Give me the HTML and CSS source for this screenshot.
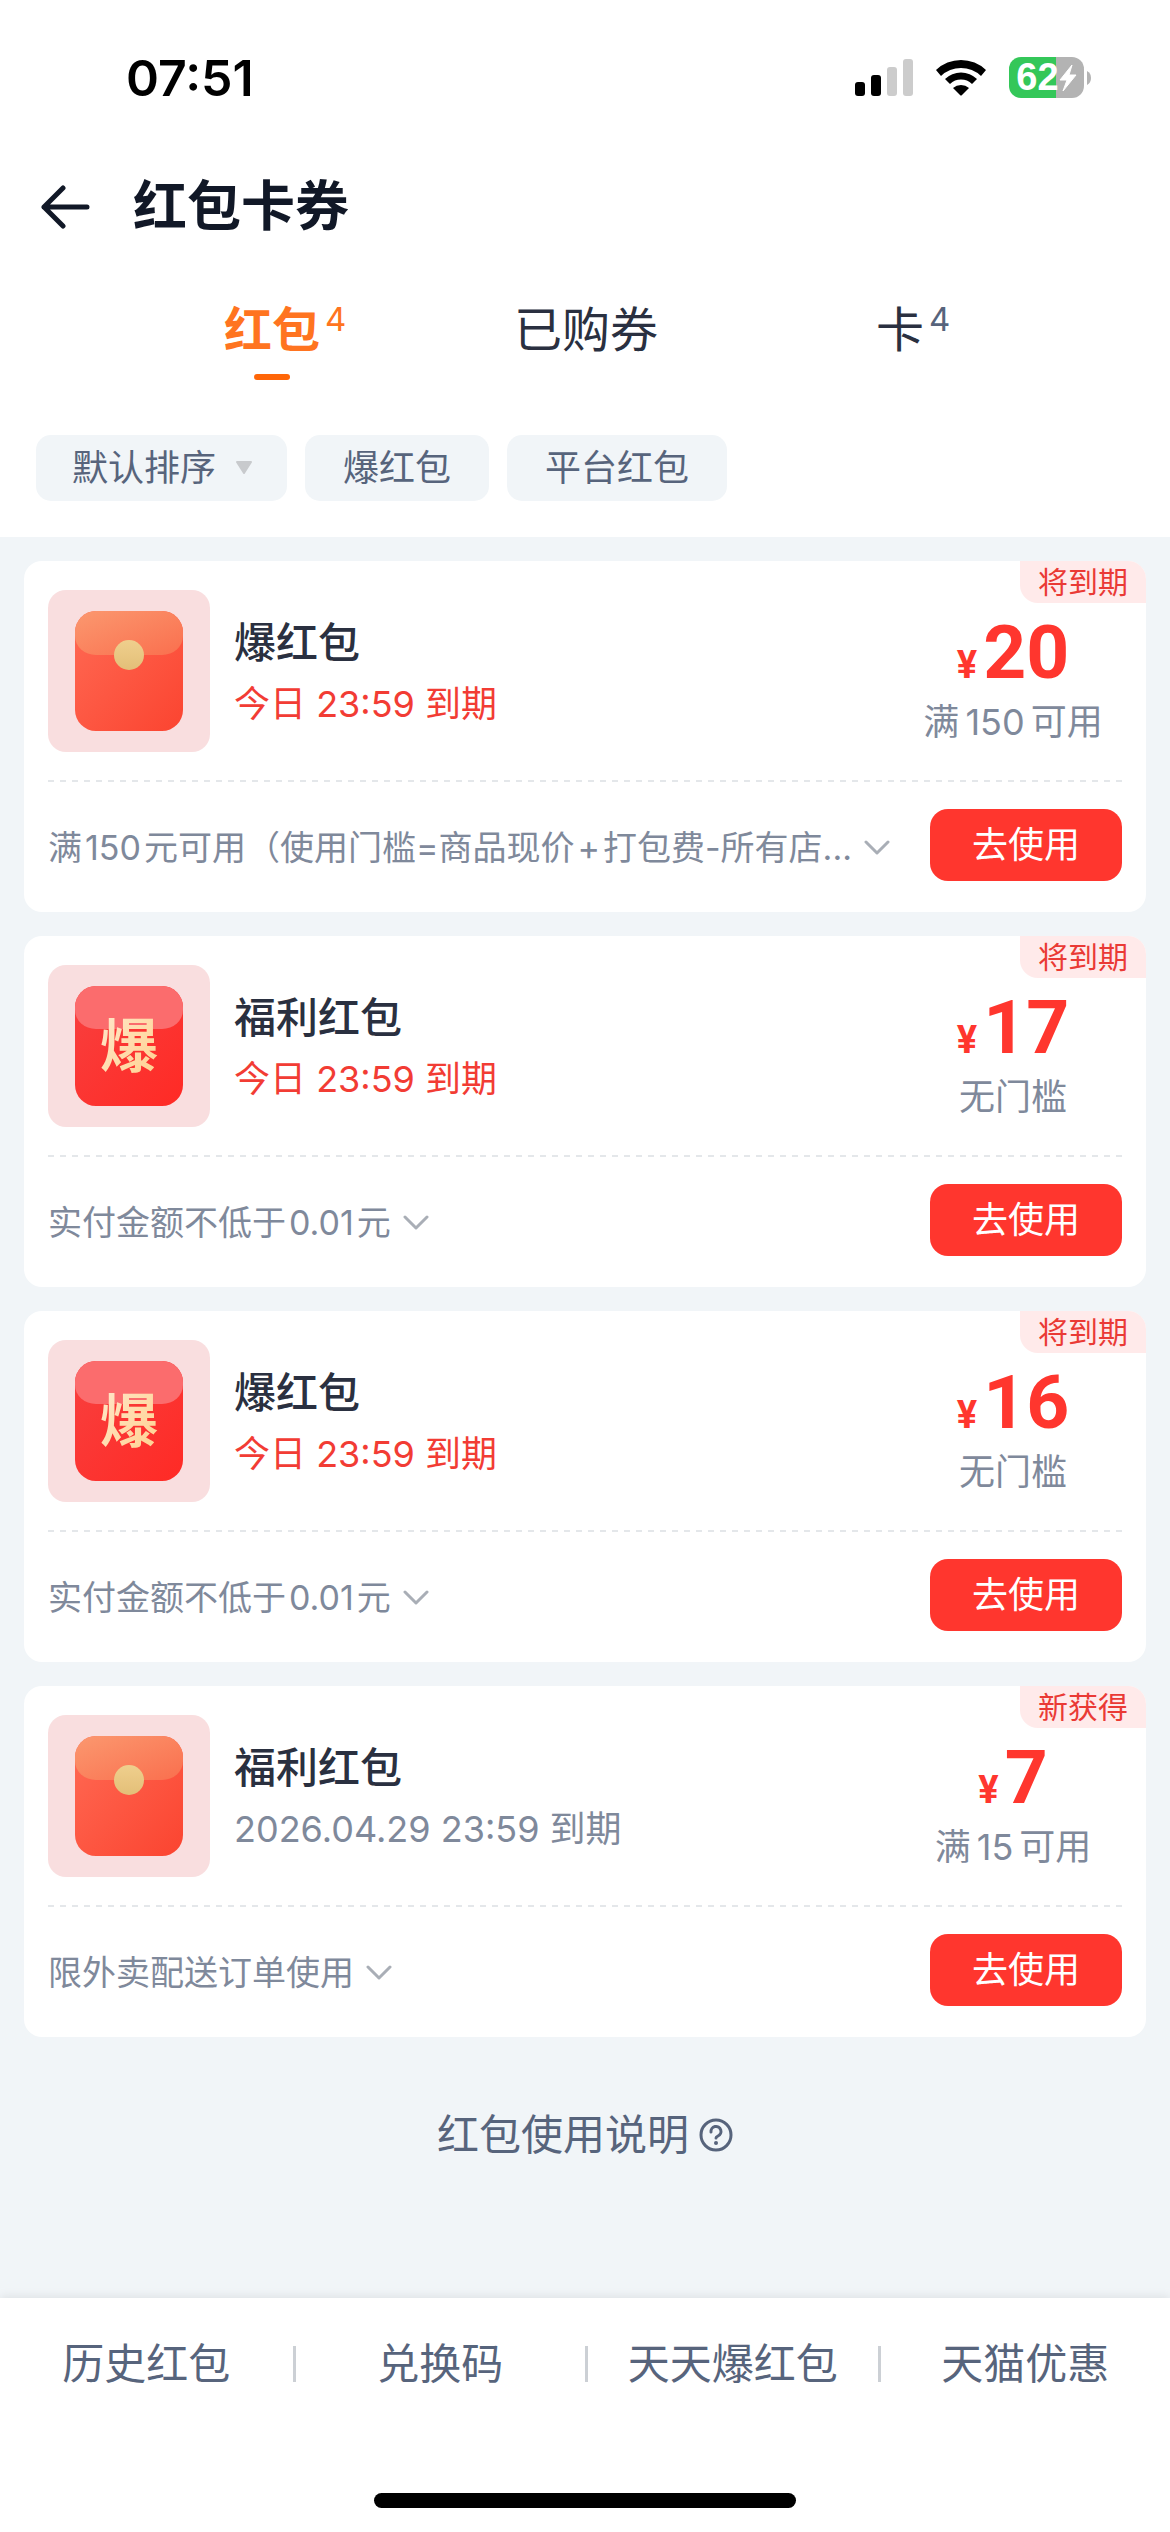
FILE: index.html
```html
<!DOCTYPE html>
<html lang="zh-CN">
<head>
<meta charset="utf-8">
<meta name="viewport" content="width=device-width, initial-scale=1">
<title>红包卡券</title>
<link rel="stylesheet" href="styles.css">
</head>
<body>
<svg class="defs" aria-hidden="true">
  <defs>
    <linearGradient id="body-orange" x1="0" y1="0" x2="1" y2="1"><stop offset="0" stop-color="#ff6a54"/><stop offset="1" stop-color="#fb4430"/></linearGradient>
    <linearGradient id="flap-orange" x1="0" y1="0" x2="1" y2="1"><stop offset="0" stop-color="#fb986f"/><stop offset="1" stop-color="#fa6f4e"/></linearGradient>
    <linearGradient id="seal" x1="0" y1="0" x2="0" y2="1"><stop offset="0" stop-color="#efcf8d"/><stop offset="1" stop-color="#e3bf78"/></linearGradient>
    <linearGradient id="body-red" x1="0" y1="0" x2="1" y2="1"><stop offset="0" stop-color="#f8403f"/><stop offset="1" stop-color="#ff2a25"/></linearGradient>
    <linearGradient id="gold" x1="0" y1="0" x2="1" y2="1"><stop offset="0" stop-color="#ffe9cf"/><stop offset="1" stop-color="#ffd08c"/></linearGradient>
  </defs>
  <symbol id="envelope" viewBox="0 0 162 162">
    <rect x="27" y="21" width="108" height="120" rx="21" fill="url(#body-orange)"/>
    <path d="M48 21H114A21 21 0 0 1 135 42V46A21 19 0 0 1 114 65H48A21 19 0 0 1 27 46V42A21 21 0 0 1 48 21Z" fill="url(#flap-orange)"/>
    <circle cx="81" cy="65" r="15" fill="url(#seal)"/>
  </symbol>
  <symbol id="packet" viewBox="0 0 162 162">
    <rect x="27" y="21" width="108" height="120" rx="21" fill="url(#body-red)"/>
    <path d="M48 21H114A21 21 0 0 1 135 42V45A21 19 0 0 1 114 64H48A21 19 0 0 1 27 45V42A21 21 0 0 1 48 21Z" fill="#fb6c6d"/>
  </symbol>
  <symbol id="chevron" viewBox="0 0 26 16">
    <path d="M2 2L13 13L24 2" fill="none" stroke="#a9aeb6" stroke-width="3" stroke-linecap="round" stroke-linejoin="round"/>
  </symbol>
</svg>

<div class="page">
  <header class="top">
    <div class="status">
      <time class="clock">07:51</time>
      <div class="status-icons">
        <svg width="58" height="37" viewBox="0 0 58 37" role="img" aria-label="信号">
          <rect x="0" y="23" width="10" height="14" rx="3"/><rect x="16" y="16" width="10" height="21" rx="3"/>
          <rect x="32" y="8" width="10" height="29" rx="3" fill="#ccc"/><rect x="48" y="0" width="10" height="37" rx="3" fill="#ccc"/>
        </svg>
        <svg class="wifi" width="52" height="38" viewBox="0 0 52 38" role="img" aria-label="Wi-Fi">
          <path d="M1 11A36 36 0 0 1 51 11L46 17A29 29 0 0 0 6 17Z"/>
          <path d="M10 20A23 23 0 0 1 42 20L37 25A16 16 0 0 0 15 25Z"/>
          <path d="M18 29A12 12 0 0 1 34 29L27 36Q26 37 25 36Z"/>
        </svg>
        <div class="battery">
          <span class="level">62</span>
          <svg width="18" height="28" viewBox="0 0 18 28" aria-hidden="true"><path d="M13 1L1 16H8L4 27L17 11H10Z" fill="#fff" stroke="#fff" stroke-linejoin="round"/></svg>
        </div>
        <svg class="battery-cap" width="4" height="14" viewBox="0 0 4 14" aria-hidden="true"><path d="M0 0Q4 2 4 7T0 14Z" fill="#b3b3b3"/></svg>
      </div>
    </div>
    <div class="title-bar">
      <button class="back" type="button" aria-label="返回">
        <svg width="50" height="44" viewBox="0 0 50 44" aria-hidden="true"><path d="M47 22H4M23 3L4 22L23 41" fill="none" stroke="#111827" stroke-width="5" stroke-linecap="round" stroke-linejoin="round"/></svg>
      </button>
      <h1>红包卡券</h1>
    </div>
    <div class="tabs" role="tablist">
      <button class="tab active" type="button" role="tab" aria-selected="true"><span class="tab-label">红包<sup>4</sup></span></button>
      <button class="tab" type="button" role="tab" aria-selected="false"><span class="tab-label">已购券</span></button>
      <button class="tab" type="button" role="tab" aria-selected="false"><span class="tab-label">卡<sup>4</sup></span></button>
    </div>
    <div class="filters">
      <div class="sort">
        <select class="chip" aria-label="排序"><option>默认排序</option></select>
        <svg width="18" height="14" viewBox="0 0 18 14" aria-hidden="true"><path d="M2 1H16L9 12Z" fill="#c8cacd" stroke="#c8cacd" stroke-width="2" stroke-linejoin="round"/></svg>
      </div>
      <button class="chip" type="button">爆红包</button>
      <button class="chip" type="button">平台红包</button>
    </div>
  </header>

  <main class="list">
    <article class="card">
      <span class="tag">将到期</span>
      <div class="card-main">
        <svg class="thumb" viewBox="0 0 162 162" aria-hidden="true"><use href="#envelope"/></svg>
        <div class="info"><h2>爆红包</h2><p class="expiry soon">今日 23:59 到期</p></div>
        <div class="value"><p class="price"><span class="yen">¥</span>20</p><p class="limit">满<span class="num">150</span>可用</p></div>
      </div>
      <div class="card-foot">
        <button class="rule" type="button"><span class="rule-text">满<span class="num">150</span>元可用（使用门槛=商品现价<span class="num">+</span>打包费-所有店...</span><svg class="chevron" aria-hidden="true"><use href="#chevron"/></svg></button>
        <button class="use" type="button">去使用</button>
      </div>
    </article>

    <article class="card">
      <span class="tag">将到期</span>
      <div class="card-main">
        <svg class="thumb" viewBox="0 0 162 162" aria-hidden="true"><use href="#packet"/><text class="packet-word" x="81" y="102" text-anchor="middle" fill="url(#gold)">爆</text></svg>
        <div class="info"><h2>福利红包</h2><p class="expiry soon">今日 23:59 到期</p></div>
        <div class="value"><p class="price"><span class="yen">¥</span>17</p><p class="limit">无门槛</p></div>
      </div>
      <div class="card-foot">
        <button class="rule" type="button"><span class="rule-text">实付金额不低于<span class="num">0.01</span>元</span><svg class="chevron" aria-hidden="true"><use href="#chevron"/></svg></button>
        <button class="use" type="button">去使用</button>
      </div>
    </article>

    <article class="card">
      <span class="tag">将到期</span>
      <div class="card-main">
        <svg class="thumb" viewBox="0 0 162 162" aria-hidden="true"><use href="#packet"/><text class="packet-word" x="81" y="102" text-anchor="middle" fill="url(#gold)">爆</text></svg>
        <div class="info"><h2>爆红包</h2><p class="expiry soon">今日 23:59 到期</p></div>
        <div class="value"><p class="price"><span class="yen">¥</span>16</p><p class="limit">无门槛</p></div>
      </div>
      <div class="card-foot">
        <button class="rule" type="button"><span class="rule-text">实付金额不低于<span class="num">0.01</span>元</span><svg class="chevron" aria-hidden="true"><use href="#chevron"/></svg></button>
        <button class="use" type="button">去使用</button>
      </div>
    </article>

    <article class="card">
      <span class="tag">新获得</span>
      <div class="card-main">
        <svg class="thumb" viewBox="0 0 162 162" aria-hidden="true"><use href="#envelope"/></svg>
        <div class="info"><h2>福利红包</h2><p class="expiry">2026.04.29 23:59 到期</p></div>
        <div class="value"><p class="price"><span class="yen">¥</span>7</p><p class="limit">满<span class="num">15</span>可用</p></div>
      </div>
      <div class="card-foot">
        <button class="rule" type="button"><span class="rule-text">限外卖配送订单使用</span><svg class="chevron" aria-hidden="true"><use href="#chevron"/></svg></button>
        <button class="use" type="button">去使用</button>
      </div>
    </article>

    <a class="help" href="#help">红包使用说明
      <svg width="34" height="34" viewBox="0 0 34 34" aria-hidden="true"><g fill="none" stroke="#57647c" stroke-width="3" stroke-linecap="round" stroke-linejoin="round"><circle cx="17" cy="17" r="15"/><path d="M12 14A5 5 0 1 1 19 18Q17 19 17 20"/></g><circle cx="17" cy="25" r="2" fill="#57647c"/></svg>
    </a>
  </main>

  <footer class="bottom">
    <nav class="links">
      <a href="#history">历史红包</a>
      <a href="#redeem">兑换码</a>
      <a href="#daily">天天爆红包</a>
      <a href="#tmall">天猫优惠</a>
    </nav>
    <div class="home-bar"></div>
  </footer>
</div>
</body>
</html>
```
FILE: styles.css
```css
* { box-sizing: border-box; }

body {
  margin: 0;
  background: #f1f5f8;
  color: #2a3040;
  font-family: Inter, "Noto Sans CJK SC", sans-serif;
}

button, select {
  margin: 0;
  padding: 0;
  border: 0;
  background: none;
  color: inherit;
  font: inherit;
  appearance: none;
}

h1, h2, p { margin: 0; }
a { color: inherit; text-decoration: none; }
svg { display: block; flex: none; }
.defs { position: absolute; width: 0; height: 0; }

.page {
  display: flex;
  flex-direction: column;
  min-height: 100vh;
}

.top { background: #fff; }

/* Status bar */
.status {
  display: flex;
  align-items: center;
  justify-content: space-between;
  height: 141px;
  padding: 14px 79px 0 126px;
}
.clock {
  color: #000;
  font-size: 50px;
  font-weight: 600;
  line-height: 60px;
}
.status-icons { display: flex; align-items: center; }
.wifi { margin: 0 22px; }
.battery {
  display: flex;
  align-items: center;
  justify-content: center;
  width: 75px;
  height: 41px;
  border-radius: 12px;
  background: linear-gradient(90deg, #34c759 63%, #b3b3b3 63%);
}
.level {
  color: #fff;
  font-family: "Liberation Sans", sans-serif;
  font-size: 38px;
  font-weight: 700;
  line-height: 41px;
}
.battery-cap { margin-left: 3px; }

/* Title */
.title-bar {
  display: flex;
  align-items: center;
  gap: 43px;
  height: 132px;
  padding: 0 40px;
}
h1 {
  color: #111827;
  font-size: 54px;
  font-weight: 600;
  line-height: 72px;
}

/* Tabs */
.tabs {
  display: grid;
  grid-template-columns: repeat(3, 1fr);
  padding: 24px 113px 0 115px;
}
.tab {
  display: flex;
  flex-direction: column;
  align-items: center;
  gap: 11px;
  height: 83px;
  font-size: 48px;
  line-height: 66px;
}
.tab-label { position: relative; }
.tab sup {
  position: absolute;
  left: 100%;
  top: 4px;
  margin-left: 5px;
  color: #57647c;
  font-size: 33px;
  font-weight: 400;
  line-height: 36px;
}
.active { color: #ff7420; font-weight: 600; }
.active sup { color: #ff7420; }
.active::after {
  content: "";
  width: 36px;
  height: 6px;
  border-radius: 3px;
  background: #ff6608;
}

/* Filters */
.filters {
  display: flex;
  gap: 18px;
  padding: 55px 36px 36px;
}
.chip {
  height: 66px;
  padding: 0 38px;
  border-radius: 15px;
  background: #f1f5f8;
  color: #57647c;
  font-size: 36px;
  line-height: 66px;
}
.sort { display: grid; align-items: center; }
.sort > * { grid-area: 1 / 1; }
.sort .chip { padding: 0 70px 0 36px; }
.sort svg { justify-self: end; margin-right: 34px; pointer-events: none; }

/* Coupon cards */
.list {
  display: flex;
  flex: 1;
  flex-direction: column;
  gap: 24px;
  padding: 24px;
}
.card {
  position: relative;
  padding: 0 24px;
  border-radius: 18px;
  background: #fff;
}
.tag {
  position: absolute;
  top: 0;
  right: 0;
  padding: 0 18px;
  border-radius: 0 18px;
  background: #ffeaea;
  color: #ea3a35;
  font-size: 30px;
  line-height: 42px;
}
.card-main {
  display: flex;
  align-items: center;
  gap: 24px;
  padding: 29px 0 28px;
}
.thumb {
  width: 162px;
  height: 162px;
  border-radius: 18px;
  background: #f9dedf;
}
.packet-word {
  font-family: "Noto Sans CJK SC", sans-serif;
  font-size: 58px;
  font-weight: 700;
}
.info { flex: 1; padding-top: 4px; }
h2 {
  font-size: 42px;
  font-weight: 500;
  line-height: 62px;
}
.expiry {
  color: #7f899b;
  font-size: 36px;
  line-height: 60px;
}
.soon { color: #f23c34; }
.value {
  align-self: flex-start;
  width: 218px;
  padding-top: 29px;
}
.price {
  display: flex;
  align-items: baseline;
  justify-content: center;
  gap: 6px;
  color: #ff362e;
  font-family: Roboto, sans-serif;
  font-size: 75px;
  font-weight: 700;
  line-height: 66px;
}
.yen { font-size: 38px; line-height: 40px; }
.limit {
  margin-top: 10px;
  color: #7f899b;
  font-size: 36px;
  line-height: 54px;
  text-align: center;
}
.limit .num { margin: 0 6px; }
.card-foot {
  display: flex;
  align-items: center;
  justify-content: space-between;
  gap: 24px;
  padding: 29px 0 31px;
  background: repeating-linear-gradient(90deg, #e4e7ea 0 6px, transparent 6px 12px) top / 100% 2px no-repeat;
}
.rule {
  display: flex;
  align-items: center;
  gap: 12px;
  min-width: 0;
  padding-top: 5px;
  color: #7f899b;
  font-size: 34px;
  line-height: 48px;
}
.rule-text { white-space: nowrap; }
.rule .num { margin: 0 3px; }
.chevron { width: 26px; height: 16px; }
.use {
  flex: none;
  width: 192px;
  height: 72px;
  border-radius: 18px;
  background: #ff362e;
  color: #fff;
  font-size: 36px;
  line-height: 72px;
}

.help {
  display: flex;
  align-items: center;
  align-self: center;
  gap: 10px;
  margin-top: 44px;
  color: #57647c;
  font-size: 42px;
  line-height: 60px;
}

/* Bottom bar */
.bottom {
  padding-bottom: 24px;
  background: #fff;
  box-shadow: 0 -2px 9px rgba(0, 0, 0, 0.08);
}
.links {
  display: grid;
  grid-template-columns: repeat(4, 1fr);
  align-items: center;
  height: 132px;
}
.links a {
  color: #57647c;
  font-size: 42px;
  line-height: 36px;
  text-align: center;
  white-space: nowrap;
}
.links a + a { border-left: 3px solid #ccd0d5; }
.home-bar {
  width: 36%;
  height: 15px;
  margin: 63px auto 0;
  border-radius: 8px;
  background: #000;
}
```
